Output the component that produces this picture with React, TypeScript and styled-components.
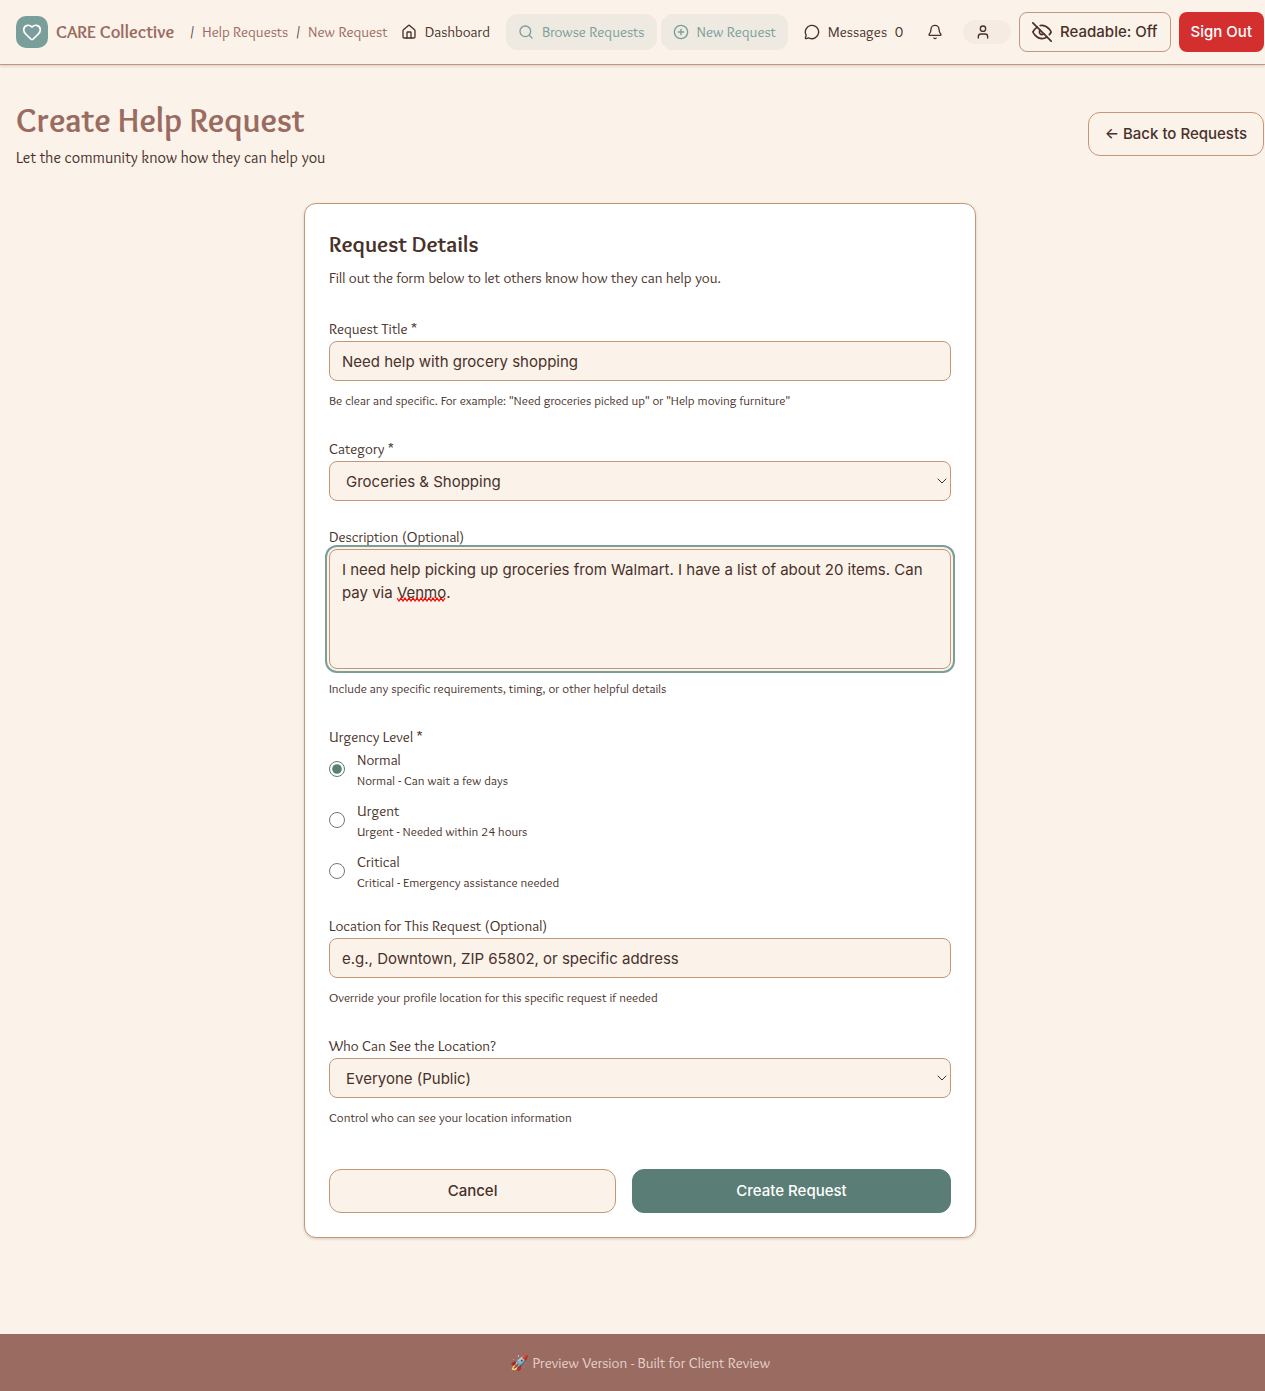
import React from 'react';
import styled, { createGlobalStyle, css } from 'styled-components';
import { Heart, House, Search, CirclePlus, MessageCircle, Bell, User, ChevronDown } from 'lucide-react';

const color = {
  cream: '#fbf2e9',
  tan: '#c39778',
  brown: '#483129',
  rose: '#9a6b61',
  sage: '#7a9e99',
  sageDark: '#5a7d76',
  sageTint: '#eee9e1',
  red: '#d32f2f',
  white: '#ffffff',
};

const display = "Overlock, Lato, sans-serif";
const ui = "Inter, 'Liberation Sans', sans-serif";

const GlobalStyle = createGlobalStyle`
  *, *::before, *::after { box-sizing: border-box; }
  body {
    margin: 0;
    background: ${color.cream};
    color: ${color.brown};
    font: 400 15px/24px ${display};
  }
  h1, h2, p { margin: 0; }
  a { color: inherit; text-decoration: none; }
`;

const Page = styled.div`
  display: flex;
  flex-direction: column;
  min-height: 100vh;
`;

const Header = styled.header`
  display: flex;
  align-items: center;
  height: 65px;
  padding: 0 1px 0 16px;
  border-bottom: 1px solid ${color.tan};
  box-shadow: 0 1px 3px rgba(72, 49, 41, 0.2);
  white-space: nowrap;
`;

const Brand = styled.a`
  display: flex;
  align-items: center;
  gap: 8px;
  margin-right: 16px;
  color: ${color.rose};
  font-size: 18px;
  font-weight: 700;
`;

const Logo = styled.span`
  display: grid;
  place-items: center;
  width: 32px;
  height: 32px;
  border-radius: 10px;
  background: ${color.sage};
  color: ${color.white};
`;

const Breadcrumb = styled.nav`
  display: flex;
  flex: 1;
  gap: 8px;
  a { color: ${color.rose}; }
`;

const Nav = styled.nav`
  display: flex;
  gap: 4px;
`;

const NavLink = styled.a<{ $active?: boolean }>`
  display: flex;
  align-items: center;
  gap: 8px;
  height: 36px;
  padding: 0 12px;
  border-radius: 12px;
  ${(p) => p.$active && css`
    background: ${color.sageTint};
    color: ${color.sage};
  `}
`;

const Actions = styled.div`
  display: flex;
  align-items: center;
  gap: 8px;
`;

const IconButton = styled.button`
  display: grid;
  place-items: center;
  width: 40px;
  height: 40px;
  padding: 0;
  border: 0;
  background: none;
  color: inherit;
`;

const UserPill = styled.span`
  display: flex;
  padding: 4px 20px 4px 12px;
  border-radius: 12px;
  background: #f5ebe2;
`;

const buttonLook = css<{ $kind?: 'outline' | 'primary' | 'danger'; $large?: boolean }>`
  display: inline-flex;
  align-items: center;
  justify-content: center;
  gap: 8px;
  height: ${(p) => (p.$large ? 44 : 40)}px;
  padding: 0 ${(p) => (p.$large ? 16 : 12)}px;
  border: 1px solid ${color.tan};
  border-radius: ${(p) => (p.$large ? 12 : 8)}px;
  background: ${color.cream};
  color: ${color.brown};
  font: 500 15px/24px ${ui};
  white-space: nowrap;
  ${(p) => p.$kind === 'primary' && css`
    border-color: ${color.sageDark};
    background: ${color.sageDark};
    color: ${color.white};
  `}
  ${(p) => p.$kind === 'danger' && css`
    border: 0;
    background: ${color.red};
    color: ${color.white};
  `}
`;

const Button = styled.button`${buttonLook}`;
const ButtonLink = styled.a`${buttonLook}`;

const Main = styled.main`
  flex: 1;
  padding: 33px 1px 96px 16px;
`;

const PageHead = styled.div`
  display: flex;
  align-items: center;
  justify-content: space-between;
  margin-bottom: 33px;
`;

const PageTitle = styled.h1`
  margin-bottom: 4px;
  color: ${color.rose};
  font-size: 34px;
  font-weight: 700;
  line-height: 44px;
`;

const Lead = styled.p`
  font-size: 16px;
`;

const Card = styled.section`
  max-width: 672px;
  margin: 0 auto;
  padding: 24px;
  border: 1px solid ${color.tan};
  border-radius: 12px;
  background: ${color.white};
  box-shadow: 0 1px 3px rgba(72, 49, 41, 0.2);
`;

const CardTitle = styled.h2`
  margin-bottom: 6px;
  font-size: 23px;
  font-weight: 700;
  line-height: 32px;
`;

const Form = styled.form`
  display: flex;
  flex-direction: column;
  gap: 24px;
  margin-top: 27px;
`;

const Field = styled.div`
  display: flex;
  flex-direction: column;
`;

const Label = styled.label`
  align-self: flex-start;
`;

const Hint = styled.p`
  margin-top: 8px;
  padding-bottom: 2px;
  font-size: 13px;
  line-height: 22px;
`;

const controlLook = css`
  width: 100%;
  height: 40px;
  padding: 0 12px;
  border: 1px solid ${color.tan};
  border-radius: 8px;
  outline: none;
  background: ${color.cream};
  color: ${color.brown};
  font: 400 15px/23px ${ui};
`;

const Input = styled.input`
  ${controlLook}
  &::placeholder { color: ${color.brown}; opacity: 1; }
`;

const SelectBox = styled.div`
  position: relative;
  svg {
    position: absolute;
    top: 12px;
    right: 1px;
    pointer-events: none;
  }
`;

const Select = styled.select`
  ${controlLook}
  display: block;
  padding: 0 16px;
  appearance: none;
`;

const TextArea = styled.textarea`
  ${controlLook}
  display: block;
  height: 120px;
  padding: 8px 12px;
  resize: none;
  box-shadow: 0 0 0 2px ${color.cream}, 0 0 0 4px ${color.sage};
`;

const TextAreaBox = styled.div`
  position: relative;
`;

const Squiggle = styled.svg`
  position: absolute;
  top: 48px;
  left: 68px;
`;

const RadioGroup = styled.fieldset`
  display: flex;
  flex-direction: column;
  gap: 12px;
  margin: 0;
  padding: 0;
  border: 0;
  legend { padding: 0; }
`;

const RadioRow = styled.label`
  display: flex;
  align-items: center;
  gap: 12px;
  input {
    width: 16px;
    height: 16px;
    margin: 0;
    accent-color: ${color.sageDark};
  }
`;

const RadioText = styled.span`
  display: flex;
  flex-direction: column;
  line-height: 23px;
  small { font-size: 13px; line-height: 16px; }
`;

const FormActions = styled.div`
  display: grid;
  grid-template-columns: 9fr 10fr;
  gap: 16px;
  padding-top: 15px;
`;

const Footer = styled.footer`
  padding: 17px 1px 16px 16px;
  background: ${color.rose};
  color: #e5d2c9;
  text-align: center;
`;

const levels = [
  { name: 'Normal', note: 'Normal - Can wait a few days' },
  { name: 'Urgent', note: 'Urgent - Needed within 24 hours' },
  { name: 'Critical', note: 'Critical - Emergency assistance needed' },
];

function EyeOffIcon() {
  return (
    <svg width="20" height="20" viewBox="0 0 24 24" fill="none" stroke="currentColor" strokeWidth="2" strokeLinecap="round" strokeLinejoin="round" aria-hidden="true">
      <path d="M17.94 17.94A10.07 10.07 0 0 1 12 20c-7 0-11-8-11-8a18.45 18.45 0 0 1 5.06-5.94M9.9 4.24A9.12 9.12 0 0 1 12 4c7 0 11 8 11 8a18.5 18.5 0 0 1-2.16 3.19m-6.72-1.07a3 3 0 1 1-4.24-4.24" />
      <path d="M1 1l22 22" />
    </svg>
  );
}

export default function App() {
  return (
    <Page>
      <GlobalStyle />
      <Header>
        <Brand href="#">
          <Logo><Heart size={20} /></Logo>
          CARE Collective
        </Brand>
        <Breadcrumb aria-label="Breadcrumb">
          <span>/</span>
          <a href="#">Help Requests</a>
          <span>/</span>
          <a href="#">New Request</a>
        </Breadcrumb>
        <Nav aria-label="Main">
          <NavLink href="#"><House size={16} />Dashboard</NavLink>
          <NavLink href="#" $active><Search size={16} />Browse Requests</NavLink>
          <NavLink href="#" $active><CirclePlus size={16} />New Request</NavLink>
          <NavLink href="#"><MessageCircle size={16} />Messages<span>0</span></NavLink>
        </Nav>
        <Actions>
          <IconButton aria-label="Notifications"><Bell size={16} /></IconButton>
          <UserPill><User size={16} /></UserPill>
          <Button type="button"><EyeOffIcon />Readable: Off</Button>
          <Button type="button" $kind="danger">Sign Out</Button>
        </Actions>
      </Header>

      <Main>
        <PageHead>
          <div>
            <PageTitle>Create Help Request</PageTitle>
            <Lead>Let the community know how they can help you</Lead>
          </div>
          <ButtonLink href="#" $large>← Back to Requests</ButtonLink>
        </PageHead>

        <Card>
          <CardTitle>Request Details</CardTitle>
          <p>Fill out the form below to let others know how they can help you.</p>
          <Form onSubmit={(e) => e.preventDefault()}>
            <Field>
              <Label htmlFor="title">Request Title *</Label>
              <Input id="title" defaultValue="Need help with grocery shopping" />
              <Hint>Be clear and specific. For example: "Need groceries picked up" or "Help moving furniture"</Hint>
            </Field>
            <Field>
              <Label htmlFor="category">Category *</Label>
              <SelectBox>
                <Select id="category"><option>Groceries &amp; Shopping</option></Select>
                <ChevronDown size={16} strokeWidth={1.5} />
              </SelectBox>
            </Field>
            <Field>
              <Label htmlFor="description">Description (Optional)</Label>
              <TextAreaBox>
                <TextArea
                  id="description"
                  spellCheck={false}
                  defaultValue="I need help picking up groceries from Walmart. I have a list of about 20 items. Can pay via Venmo."
                />
                <Squiggle width="50" height="5" viewBox="0 0 50 5" fill="none" stroke="#ff0000" strokeWidth="1.2" aria-hidden="true">
                  <path d="M0 1 l2 3 l2 -3 l2 3 l2 -3 l2 3 l2 -3 l2 3 l2 -3 l2 3 l2 -3 l2 3 l2 -3 l2 3 l2 -3 l2 3 l2 -3 l2 3 l2 -3 l2 3 l2 -3 l2 3 l2 -3 l2 3 l2 -3" />
                </Squiggle>
              </TextAreaBox>
              <Hint>Include any specific requirements, timing, or other helpful details</Hint>
            </Field>
            <RadioGroup>
              <legend>Urgency Level *</legend>
              {levels.map((level, i) => (
                <RadioRow key={level.name}>
                  <input type="radio" name="urgency" defaultChecked={i === 0} />
                  <RadioText>{level.name}<small>{level.note}</small></RadioText>
                </RadioRow>
              ))}
            </RadioGroup>
            <Field>
              <Label htmlFor="location">Location for This Request (Optional)</Label>
              <Input id="location" placeholder="e.g., Downtown, ZIP 65802, or specific address" />
              <Hint>Override your profile location for this specific request if needed</Hint>
            </Field>
            <Field>
              <Label htmlFor="visibility">Who Can See the Location?</Label>
              <SelectBox>
                <Select id="visibility"><option>Everyone (Public)</option></Select>
                <ChevronDown size={16} strokeWidth={1.5} />
              </SelectBox>
              <Hint>Control who can see your location information</Hint>
            </Field>
            <FormActions>
              <Button type="button" $large>Cancel</Button>
              <Button type="submit" $large $kind="primary">Create Request</Button>
            </FormActions>
          </Form>
        </Card>
      </Main>

      <Footer>🚀 Preview Version - Built for Client Review</Footer>
    </Page>
  );
}
